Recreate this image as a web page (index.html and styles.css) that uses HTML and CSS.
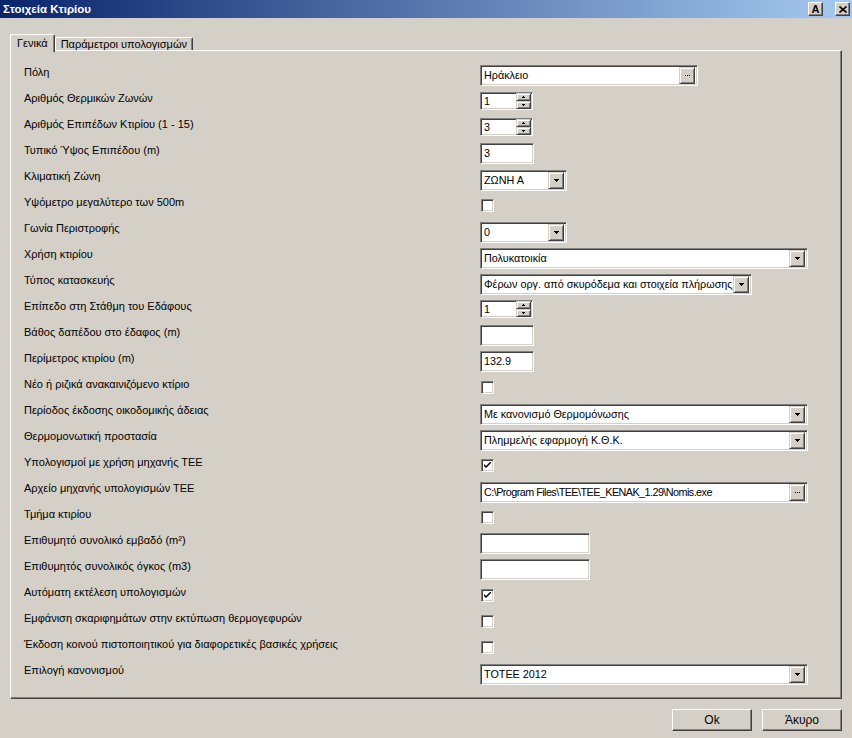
FILE: index.html
```html
<!DOCTYPE html>
<html lang="el">
<head>
<meta charset="utf-8">
<title>Στοιχεία Κτιρίου</title>
<link rel="stylesheet" href="styles.css">
</head>
<body>
<div class="window">
  <div class="titlebar">
    <span class="title">Στοιχεία Κτιρίου</span>
    <div class="tb-btns">
      <div class="tb-btn">A</div>
      <div class="tb-btn tb-close">
        <svg width="8" height="7" viewBox="0 0 8 7"><path d="M0.5 0.5 L7.5 6.5 M7.5 0.5 L0.5 6.5" stroke="#000" stroke-width="1.6" fill="none"/></svg>
      </div>
    </div>
  </div>

  <div class="tabs">
    <div class="tab active">Γενικά</div>
    <div class="tab">Παράμετροι υπολογισμών</div>
  </div>

  <div class="panel">
    <div class="form">
      <div class="label">Πόλη</div>
      <div class="field w-city"><span class="val">Ηράκλειο</span><div class="btn-mini ell"><svg width="5" height="1" viewBox="0 0 5 1"><rect x="0" y="0" width="1" height="1"/><rect x="2" y="0" width="1" height="1"/><rect x="4" y="0" width="1" height="1"/></svg></div></div>

      <div class="label">Αριθμός Θερμικών Ζωνών</div>
      <div class="spin"><span class="val">1</span><div class="spin-btns"><div class="sb"><svg class="ar" width="3" height="2" viewBox="0 0 3 2"><rect x="1" y="0" width="1" height="1"/><rect x="0" y="1" width="3" height="1"/></svg></div><div class="sb"><svg class="ar" width="3" height="2" viewBox="0 0 3 2"><rect x="0" y="0" width="3" height="1"/><rect x="1" y="1" width="1" height="1"/></svg></div></div></div>

      <div class="label">Αριθμός Επιπέδων Κτιρίου (1 - 15)</div>
      <div class="spin"><span class="val">3</span><div class="spin-btns"><div class="sb"><svg class="ar" width="3" height="2" viewBox="0 0 3 2"><rect x="1" y="0" width="1" height="1"/><rect x="0" y="1" width="3" height="1"/></svg></div><div class="sb"><svg class="ar" width="3" height="2" viewBox="0 0 3 2"><rect x="0" y="0" width="3" height="1"/><rect x="1" y="1" width="1" height="1"/></svg></div></div></div>

      <div class="label">Τυπικό Ύψος Επιπέδου (m)</div>
      <div class="field w-small"><span class="val">3</span></div>

      <div class="label">Κλιματική Ζώνη</div>
      <div class="field combo w-combo-s"><span class="val">ΖΩΝΗ Α</span><div class="btn-mini dd"><svg class="ar" width="5" height="3" viewBox="0 0 5 3"><rect x="0" y="0" width="5" height="1"/><rect x="1" y="1" width="3" height="1"/><rect x="2" y="2" width="1" height="1"/></svg></div></div>

      <div class="label">Υψόμετρο μεγαλύτερο των 500m</div>
      <div class="check"></div>

      <div class="label">Γωνία Περιστροφής</div>
      <div class="field combo w-combo-s"><span class="val">0</span><div class="btn-mini dd"><svg class="ar" width="5" height="3" viewBox="0 0 5 3"><rect x="0" y="0" width="5" height="1"/><rect x="1" y="1" width="3" height="1"/><rect x="2" y="2" width="1" height="1"/></svg></div></div>

      <div class="label">Χρήση κτιρίου</div>
      <div class="field combo w-wide"><span class="val">Πολυκατοικία</span><div class="btn-mini dd"><svg class="ar" width="5" height="3" viewBox="0 0 5 3"><rect x="0" y="0" width="5" height="1"/><rect x="1" y="1" width="3" height="1"/><rect x="2" y="2" width="1" height="1"/></svg></div></div>

      <div class="label">Τύπος κατασκευής</div>
      <div class="field combo w-mid"><span class="val">Φέρων οργ. από σκυρόδεμα και στοιχεία πλήρωσης</span><div class="btn-mini dd"><svg class="ar" width="5" height="3" viewBox="0 0 5 3"><rect x="0" y="0" width="5" height="1"/><rect x="1" y="1" width="3" height="1"/><rect x="2" y="2" width="1" height="1"/></svg></div></div>

      <div class="label">Επίπεδο στη Στάθμη του Εδάφους</div>
      <div class="spin"><span class="val">1</span><div class="spin-btns"><div class="sb"><svg class="ar" width="3" height="2" viewBox="0 0 3 2"><rect x="1" y="0" width="1" height="1"/><rect x="0" y="1" width="3" height="1"/></svg></div><div class="sb"><svg class="ar" width="3" height="2" viewBox="0 0 3 2"><rect x="0" y="0" width="3" height="1"/><rect x="1" y="1" width="1" height="1"/></svg></div></div></div>

      <div class="label">Βάθος δαπέδου στο έδαφος (m)</div>
      <div class="field w-small"></div>

      <div class="label">Περίμετρος κτιρίου (m)</div>
      <div class="field w-small"><span class="val">132.9</span></div>

      <div class="label">Νέο ή ριζικά ανακαινιζόμενο κτίριο</div>
      <div class="check"></div>

      <div class="label">Περίοδος έκδοσης οικοδομικής άδειας</div>
      <div class="field combo w-wide"><span class="val">Με κανονισμό Θερμομόνωσης</span><div class="btn-mini dd"><svg class="ar" width="5" height="3" viewBox="0 0 5 3"><rect x="0" y="0" width="5" height="1"/><rect x="1" y="1" width="3" height="1"/><rect x="2" y="2" width="1" height="1"/></svg></div></div>

      <div class="label">Θερμομονωτική προστασία</div>
      <div class="field combo w-wide"><span class="val">Πλημμελής εφαρμογή Κ.Θ.Κ.</span><div class="btn-mini dd"><svg class="ar" width="5" height="3" viewBox="0 0 5 3"><rect x="0" y="0" width="5" height="1"/><rect x="1" y="1" width="3" height="1"/><rect x="2" y="2" width="1" height="1"/></svg></div></div>

      <div class="label">Υπολογισμοί με χρήση μηχανής ΤΕΕ</div>
      <div class="check checked"><svg width="7" height="7" viewBox="0 0 7 7"><path d="M0 2 L0 4 L2 6 L7 1 L7 -1 L2 4 Z" fill="#000"/></svg></div>

      <div class="label">Αρχείο μηχανής υπολογισμών ΤΕΕ</div>
      <div class="field combo w-wide"><span class="val path">C:\Program Files\TEE\TEE_KENAK_1.29\Nomis.exe</span><div class="btn-mini ell"><svg width="5" height="1" viewBox="0 0 5 1"><rect x="0" y="0" width="1" height="1"/><rect x="2" y="0" width="1" height="1"/><rect x="4" y="0" width="1" height="1"/></svg></div></div>

      <div class="label">Τμήμα κτιρίου</div>
      <div class="check"></div>

      <div class="label">Επιθυμητό συνολικό εμβαδό (m²)</div>
      <div class="field w-med"></div>

      <div class="label">Επιθυμητός συνολικός όγκος (m3)</div>
      <div class="field w-med"></div>

      <div class="label">Αυτόματη εκτέλεση υπολογισμών</div>
      <div class="check checked"><svg width="7" height="7" viewBox="0 0 7 7"><path d="M0 2 L0 4 L2 6 L7 1 L7 -1 L2 4 Z" fill="#000"/></svg></div>

      <div class="label">Εμφάνιση σκαριφημάτων στην εκτύπωση θερμογεφυρών</div>
      <div class="check"></div>

      <div class="label">Έκδοση κοινού πιστοποιητικού για διαφορετικές βασικές χρήσεις</div>
      <div class="check"></div>

      <div class="label">Επιλογή κανονισμού</div>
      <div class="field combo w-wide"><span class="val">ΤΟΤΕΕ 2012</span><div class="btn-mini dd"><svg class="ar" width="5" height="3" viewBox="0 0 5 3"><rect x="0" y="0" width="5" height="1"/><rect x="1" y="1" width="3" height="1"/><rect x="2" y="2" width="1" height="1"/></svg></div></div>
    </div>
  </div>

  <div class="footer">
    <div class="button">Ok</div>
    <div class="button">Άκυρο</div>
  </div>
</div>
</body>
</html>
```

FILE: styles.css
```css
html, body {
  margin: 0;
  padding: 0;
  background: #d4d0c8;
}
body {
  font-family: "Liberation Sans", Arial, sans-serif;
  font-size: 11px;
  color: #000;
}
.window {
  width: 852px;
  height: 738px;
  background: #d4d0c8;
  display: flex;
  flex-direction: column;
  overflow: hidden;
}

/* title bar */
.titlebar {
  height: 18px;
  flex: none;
  background: linear-gradient(to right, #0a246a, #a6caf0);
  display: flex;
  align-items: center;
  justify-content: space-between;
  padding: 0 2px 0 3px;
}
.title {
  color: #fff;
  font-weight: bold;
  font-size: 11.5px;
}
.tb-btns {
  display: flex;
  gap: 12px;
}
.tb-btn {
  width: 15px;
  height: 14px;
  box-sizing: border-box;
  background: #d4d0c8;
  border: 1px solid;
  border-color: #fff #404040 #404040 #fff;
  box-shadow: inset -1px -1px #808080;
  display: flex;
  align-items: center;
  justify-content: center;
  font-weight: bold;
  font-size: 11px;
  line-height: 1;
}

/* tabs */
.tabs {
  display: flex;
  align-items: flex-end;
  height: 16px;
  margin-top: 16px;
  padding-left: 10px;
  position: relative;
  z-index: 1;
  flex: none;
}
.tab {
  height: 13px;
  box-sizing: border-box;
  padding: 0 5px;
  border-top: 1px solid #fff;
  border-left: 1px solid #fff;
  border-right: 1px solid #404040;
  box-shadow: inset -1px 0 #808080;
  border-radius: 2px 2px 0 0;
  background: #d4d0c8;
  line-height: 12px;
  white-space: nowrap;
}
.tab.active {
  height: 18px;
  margin-bottom: -2px;
  padding: 2px 6px 0 6px;
}

/* panel */
.panel {
  width: 832px;
  height: 649px;
  margin-left: 10px;
  box-sizing: border-box;
  border: 1px solid;
  border-color: #fff #404040 #404040 #fff;
  box-shadow: inset -1px -1px #808080;
  padding: 13px 0 0 13px;
  flex: none;
}
.form {
  display: grid;
  grid-template-columns: 456px 1fr;
  grid-auto-rows: 26px;
  align-items: start;
}
.label {
  padding-top: 2px;
  line-height: 13px;
  white-space: nowrap;
}

/* sunken fields */
.field, .spin {
  height: 21px;
  margin-top: 1px;
  box-sizing: border-box;
  background: #fff;
  border: 1px solid;
  border-color: #808080 #fff #fff #808080;
  box-shadow: inset 1px 1px #404040, inset -1px -1px #d4d0c8;
  display: flex;
  align-items: center;
  padding: 2px 2px 2px 3px;
  font-size: 10.8px;
}
.combo { margin-top: 2px; }
.val {
  flex: 1;
  white-space: nowrap;
  overflow: hidden;
  line-height: 13px;
}
.val.path { letter-spacing: -0.55px; }
.w-city { width: 218px; }
.w-small { width: 54px; }
.w-med { width: 110px; }
.w-combo-s { width: 87px; }
.w-wide { width: 328px; }
.w-mid { width: 272px; }

.btn-mini {
  width: 16px;
  height: 17px;
  box-sizing: border-box;
  background: #d4d0c8;
  border: 1px solid;
  border-color: #d4d0c8 #404040 #404040 #d4d0c8;
  box-shadow: inset 1px 1px #fff, inset -1px -1px #808080;
  display: flex;
  align-items: center;
  justify-content: center;
  flex: none;
}
.btn-mini svg rect,
.sb svg rect { fill: #000; }
.ar { display: block; }

/* spinner */
.spin {
  width: 53px;
  height: 18px;
  margin-top: 2px;
  padding: 1px 1px 1px 3px;
}
.spin-btns {
  display: flex;
  flex-direction: column;
  width: 15px;
  height: 16px;
  flex: none;
}
.sb {
  flex: 1;
  box-sizing: border-box;
  background: #d4d0c8;
  border: 1px solid;
  border-color: #d4d0c8 #404040 #404040 #d4d0c8;
  box-shadow: inset 1px 1px #fff, inset -1px -1px #808080;
  display: flex;
  align-items: center;
  justify-content: center;
}

/* checkbox */
.check {
  width: 13px;
  height: 13px;
  margin-top: 5px;
  margin-left: 1px;
  box-sizing: border-box;
  background: #fff;
  border: 1px solid;
  border-color: #808080 #fff #fff #808080;
  box-shadow: inset 1px 1px #404040, inset -1px -1px #d4d0c8;
  display: flex;
  align-items: center;
  justify-content: center;
}

/* footer */
.footer {
  display: flex;
  justify-content: flex-end;
  gap: 10px;
  padding: 10px 10px 0 0;
}
.button {
  width: 80px;
  height: 22px;
  box-sizing: border-box;
  border: 1px solid;
  border-color: #fff #404040 #404040 #fff;
  box-shadow: inset -1px -1px #808080;
  display: flex;
  align-items: center;
  justify-content: center;
  font-size: 12px;
}
```
